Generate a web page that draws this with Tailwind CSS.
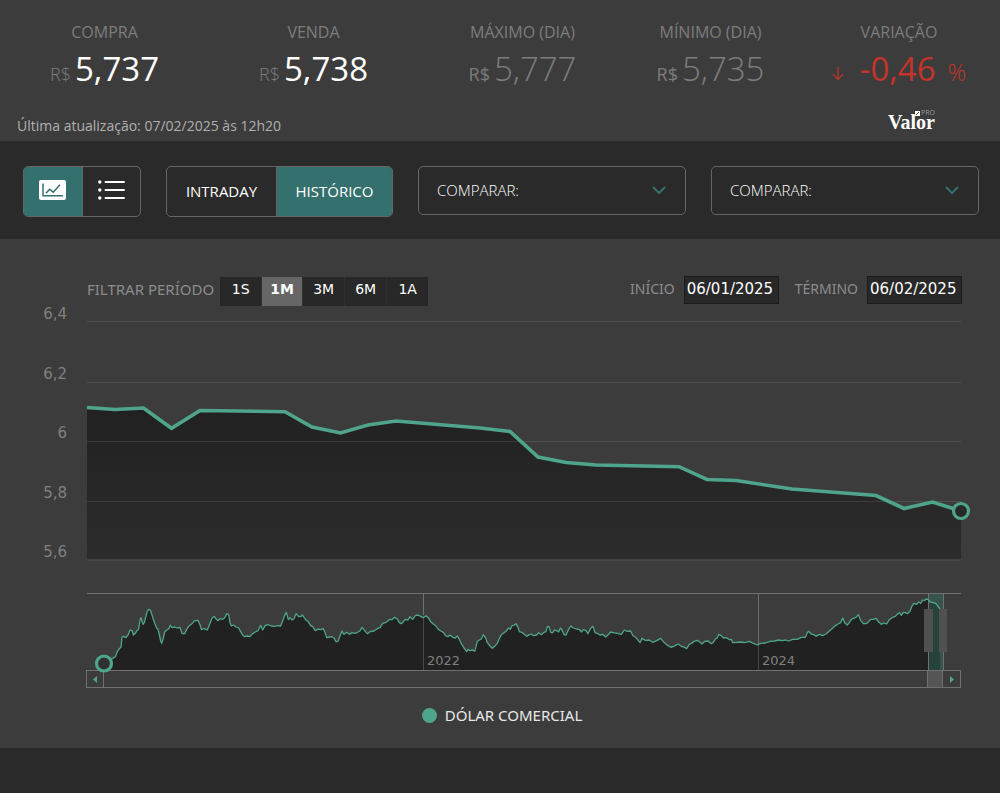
<!DOCTYPE html>
<html lang="pt-BR">
<head>
    <meta charset="UTF-8">
    <meta name="viewport" content="width=device-width, initial-scale=1.0">
    <title>Dólar Comercial - Valor PRO</title>
    <script src="https://cdn.jsdelivr.net/npm/@tailwindcss/browser@4"></script>
</head>
<body class="min-h-screen bg-[#2a2a2a] font-['Open_Sans',sans-serif] text-white antialiased">

    <!-- Cotações -->
    <header class="bg-[#3c3c3c] pt-[21px]">
        <dl class="grid grid-cols-[209fr_209fr_209fr_167fr_206fr] text-center text-[#7c7c7c]">
            <div>
                <dt class="text-[16px] leading-[22px]">COMPRA</dt>
                <dd class="flex h-[52px] items-baseline justify-center gap-1 leading-[52px]"><span class="text-[18px] font-light">R$</span><span class="text-[33px] text-white">5,737</span></dd>
            </div>
            <div>
                <dt class="text-[16px] leading-[22px]">VENDA</dt>
                <dd class="flex h-[52px] items-baseline justify-center gap-1 leading-[52px]"><span class="text-[18px] font-light">R$</span><span class="text-[33px] text-white">5,738</span></dd>
            </div>
            <div>
                <dt class="text-[16px] leading-[22px]">MÁXIMO (DIA)</dt>
                <dd class="flex h-[52px] items-baseline justify-center gap-1 leading-[52px]"><span class="text-[18px]">R$</span><span class="text-[33px] font-light">5,777</span></dd>
            </div>
            <div>
                <dt class="text-[16px] leading-[22px]">MÍNIMO (DIA)</dt>
                <dd class="flex h-[52px] items-baseline justify-center gap-1 leading-[52px]"><span class="text-[18px]">R$</span><span class="text-[33px] font-light">5,735</span></dd>
            </div>
            <div class="pl-1">
                <dt class="text-[16px] leading-[22px]">VARIAÇÃO</dt>
                <dd class="flex h-[52px] items-baseline justify-center text-[#c4342b] leading-[52px]">
                    <svg class="mr-4 h-[14px] w-[12px]" viewBox="0 0 12 14" fill="none" stroke="currentColor" stroke-width="1.2"><path d="M6 0v12.5M.8 7.2 6 12.5l5.2-5.3"/></svg>
                    <span class="mr-3 text-[33px]">-0,46</span><span class="text-[23px] font-light">%</span>
                </dd>
            </div>
        </dl>
        <div class="flex items-start justify-between pt-[15px] pr-[65px] pl-[17px]">
            <p class="text-[14px] leading-[31px] text-[#b0b0b0]">Última atualização: 07/02/2025 às 12h20</p>
            <a href="#" class="relative block font-['Liberation_Serif',serif] text-[20px] leading-[24px] font-bold text-white">Valor
                <span class="absolute -top-0.5 right-0 flex items-center gap-px font-['Open_Sans',sans-serif] text-[7px] leading-[10px] font-normal text-[#9a9a9a]">
                    <svg class="h-[5px] w-[5px]" viewBox="0 0 5 5"><path fill="#fff" d="M0 0h5v5H0z"/><path stroke="#3c3c3c" d="m1 4 3-3"/></svg>PRO
                </span>
            </a>
        </div>
    </header>

    <!-- Controles -->
    <nav class="flex items-start gap-[25px] bg-[#2a2a2a] pt-[25px] pr-[21px] pb-[22px] pl-[23px] text-[15px]">
        <div class="flex h-[51px] w-[118px] overflow-hidden rounded-[5px] border border-[#666]">
            <button aria-label="Gráfico" class="flex flex-1 items-center justify-center border-r border-[#666] bg-[#34706d]">
                <svg class="mb-1 h-[20px] w-[27px]" viewBox="0 0 27 20" fill="none">
                    <rect width="27" height="20" rx="2" fill="#fff"/>
                    <path d="M4 3.5v12.3h20" stroke="#34706d" stroke-width="1.5"/>
                    <path d="m7 13.2 3.6-4 3.6 3 6.8-7.4" stroke="#34706d" stroke-width="1.5"/>
                </svg>
            </button>
            <button aria-label="Lista" class="flex flex-1 items-center justify-center">
                <svg class="mb-1 h-[20px] w-[27px]" viewBox="0 0 27 20" fill="#fff">
                    <circle cx="1.8" cy="2" r="1.7"/><circle cx="1.8" cy="10" r="1.7"/><circle cx="1.8" cy="18" r="1.7"/>
                    <path d="M7.5 2H26M7.5 10H26M7.5 18H26" stroke="#fff" stroke-width="1.9" stroke-linecap="round"/>
                </svg>
            </button>
        </div>
        <div class="flex h-[51px] w-[227px] overflow-hidden rounded-[5px] border border-[#666]">
            <button class="w-[110px] border-r border-[#666]">INTRADAY</button>
            <button class="flex-1 bg-[#34706d]">HISTÓRICO</button>
        </div>
        <div class="relative flex-1">
            <select aria-label="Comparar" class="h-[49px] w-full appearance-none rounded-[5px] border border-[#666] bg-[#2a2a2a] px-[18px] font-light">
                <option>COMPARAR:</option>
            </select>
            <svg class="pointer-events-none absolute top-5 right-5 h-[9px] w-[14px]" viewBox="0 0 14 9" fill="none" stroke="#34706d" stroke-width="2"><path d="m1 1 6 6 6-6"/></svg>
        </div>
        <div class="relative flex-1">
            <select aria-label="Comparar" class="h-[49px] w-full appearance-none rounded-[5px] border border-[#666] bg-[#2a2a2a] px-[18px] font-light">
                <option>COMPARAR:</option>
            </select>
            <svg class="pointer-events-none absolute top-5 right-5 h-[9px] w-[14px]" viewBox="0 0 14 9" fill="none" stroke="#34706d" stroke-width="2"><path d="m1 1 6 6 6-6"/></svg>
        </div>
    </nav>

    <!-- Gráfico -->
    <main class="bg-[#3c3c3c] pt-[37px] pb-[22px] font-['Noto_Sans',sans-serif] text-[15px]">
        <div class="flex h-[30px] items-start justify-between pr-[3.8%] pl-[8.7%] text-[#8c8c8c]">
            <div class="flex items-start">
                <span class="mr-1.5 leading-[26px]">FILTRAR PERÍODO</span>
                <div class="mt-px flex divide-x divide-[#303030] bg-[#282828] font-['DejaVu_Sans',sans-serif] text-[14px] text-white">
                    <button class="h-[29px] w-[42px] pb-1">1S</button>
                    <button class="h-[29px] w-[41px] bg-[#666] pb-1 font-bold">1M</button>
                    <button class="h-[29px] w-[42px] pb-1">3M</button>
                    <button class="h-[29px] w-[42px] pb-1">6M</button>
                    <button class="h-[29px] w-[41px] pb-1">1A</button>
                </div>
            </div>
            <div class="flex items-start text-[14px] leading-[25px]">
                <label for="inicio" class="mr-[9px]">INÍCIO</label>
                <input id="inicio" type="text" value="06/01/2025" class="mr-4 h-[28px] w-[95px] border border-[#1c1c1c] bg-[#282828] px-0.5 pb-0.5 font-['DejaVu_Sans',sans-serif] text-[15px] text-white">
                <label for="termino" class="mr-[9px]">TÉRMINO</label>
                <input id="termino" type="text" value="06/02/2025" class="h-[28px] w-[95px] border border-[#1c1c1c] bg-[#282828] px-0.5 pb-0.5 font-['DejaVu_Sans',sans-serif] text-[15px] text-white">
            </div>
        </div>

        <svg class="relative z-10 block w-full overflow-visible font-['DejaVu_Sans',sans-serif]" viewBox="0 306 1000 364">
            <defs>
                <linearGradient id="area" x1="0" y1="0" x2="0" y2="1">
                    <stop offset="0" stop-color="#212121"/>
                    <stop offset="1" stop-color="#2c2c2c"/>
                </linearGradient>
            </defs>

            <path fill="url(#area)" d="M87 407.5 115 409.5 143.5 408 171.5 428.3 200 410.5 285 411.7 312 427 340.5 433 368 425 396 421 480 428 510 431.5 538 457 566 462.5 596 465 679 466.7 707 479.5 736 480.5 792 489 876 495.5 904 508.5 932.5 502 961 511V560H87z"/>
            <path stroke="#fff" stroke-opacity=".1" fill="none" d="M87 321.5H961M87 382.5H961M87 441.5H961M87 501.5H961"/>
            <path stroke="#555" d="M87 560H961"/>
            <path fill="none" stroke="#4fa58c" stroke-width="3.6" d="M87 407.5 115 409.5 143.5 408 171.5 428.3 200 410.5 285 411.7 312 427 340.5 433 368 425 396 421 480 428 510 431.5 538 457 566 462.5 596 465 679 466.7 707 479.5 736 480.5 792 489 876 495.5 904 508.5 932.5 502 961 511"/>
            <circle cx="961" cy="511" r="7.5" fill="#282828" stroke="#4fa58c" stroke-width="3.2"/>

            <g fill="#808080" font-size="15" text-anchor="end">
                <text x="67" y="319">6,4</text>
                <text x="67" y="379">6,2</text>
                <text x="67" y="438">6</text>
                <text x="67" y="498">5,8</text>
                <text x="67" y="557">5,6</text>
            </g>

            <!-- Navegador com a série completa -->
            <polygon id="nav-area" fill="#212121"/>
            <path stroke="#707070" fill="none" d="M87 593.5H961"/>
            <path stroke="#707070" fill="none" d="M423.5 593V615M758.5 593V644"/>
            <path stroke="#484848" fill="none" d="M423.5 617V670M758.5 645V670"/>
            <rect x="928" y="594" width="15.5" height="76" fill="#337565" fill-opacity=".4"/>
            <path stroke="#707070" d="M928.5 594V670M943.5 594V670"/>
            <polyline id="nav-line" fill="none" stroke="#4fa58c" stroke-width="1.3" stroke-linejoin="round"/>
            <path fill="#505050" d="M924 609h9v43h-9zM939 609h8v43h-8z"/>
            <circle cx="104" cy="663.5" r="7.5" fill="#303030" stroke="#4fa58c" stroke-width="3.2"/>
            <g fill="#808080" font-size="13">
                <text x="427" y="665">2022</text>
                <text x="762" y="665">2024</text>
            </g>
        </svg>

        <!-- Barra de rolagem do navegador -->
        <div class="pr-[3.9%] pl-[8.6%]">
            <div class="flex h-[18px] border border-[#707070]">
                <button aria-label="Anterior" class="flex w-[17px] items-center justify-center border-r border-[#707070]">
                    <svg class="h-[7px] w-[4px]" viewBox="0 0 4 7"><path fill="#4fa58c" d="M4 0v7L0 3.5z"/></svg>
                </button>
                <div class="flex flex-1 justify-end">
                    <div class="w-[16px] border-x border-[#707070] bg-[#555]"></div>
                </div>
                <button aria-label="Próximo" class="flex w-[17px] items-center justify-center">
                    <svg class="h-[7px] w-[4px]" viewBox="0 0 4 7"><path fill="#4fa58c" d="M0 0v7l4-3.5z"/></svg>
                </button>
            </div>
        </div>

        <p class="mt-4 flex items-center justify-center gap-2 pl-1 leading-[22px] text-[#e8e8e8]">
            <span class="size-[15px] rounded-full bg-[#4fa58c]"></span>DÓLAR COMERCIAL
        </p>
    </main>

    <script>
        // Série histórica em três trechos: deslocamento x e pontos, em terços de pixel
        const series = [
            [0, '100,251 110,247 122,240 128,235 136,230 142,215 148,206 153,202 156,172 160,169 168,173 172,167 175,164 178,154 182,150 187,153 190,165 196,160 201,152 206,147 210,120 213,113 216,123 219,133 223,128 227,112 231,96 236,88 241,90 246,105 251,121 255,132 260,144 264,148 268,165 272,183 275,190 279,178 284,156 290,150 296,147 301,136 306,143 314,141 322,144 330,142 336,161 344,161 350,148 358,137 366,131 374,122 384,121 390,134 394,149 402,146 412,150 420,130 426,115 433,109 438,117 444,122 450,116 458,118 464,113 470,101 476,104 480,128 484,138 490,135 498,141 506,144 512,155 518,165 524,170 532,168 540,170 548,161 556,156 564,152 572,136 578,150 586,136 594,134 604,138 614,139 624,137 632,138 638,122 644,106 649,97 655,119 660,113 666,120 672,116 678,101 686,110 692,110 697,105 702,112 708,120 714,124 722,137 728,140 736,152 744,147 752,149 760,146 766,160 770,173 778,171 786,170 792,174 798,185 804,184 810,168 816,153 822,163 830,157 838,163 846,158 856,160 864,156 870,152 876,142 884,152 892,161 900,155 912,153 922,146 930,143 938,130 946,128 952,124 960,118'],
            [930, '36,119 44,112 52,117 58,128 64,131 70,125 76,118 84,120 90,110 98,118 106,107 114,105 122,109 130,113 138,107 146,115 152,125 160,132 168,138 174,147 182,153 190,157 198,168 204,170 210,165 218,172 226,174 232,168 238,178 244,191 252,204 260,215 264,208 270,212 278,210 284,214 288,200 292,184 298,180 304,177 310,164 316,172 322,188 330,198 337,205 344,199 352,190 358,176 364,164 372,158 380,152 386,144 391,148 396,137 402,136 408,131 414,142 418,155 426,157 432,163 440,169 448,164 454,162 460,167 470,165 476,158 484,164 492,157 498,155 502,140 507,139 512,157 518,158 524,150 530,152 536,156 541,144 546,150 552,164 558,165 564,152 572,138 580,144 590,147 598,149 604,156 610,149 618,152 624,161 632,145 639,139 645,158 652,160 660,165 668,163 677,171 686,163 692,156 700,158 712,160 724,163 733,150 742,154 752,153 758,166 768,173 780,188 786,175 796,181 808,180 818,187 830,182 842,175 852,187 864,197 874,202 886,197 894,192 904,199 912,201 920,206 928,193 938,188'],
            [1830, '42,184 52,181 60,187 66,192 74,184 84,183 94,191 100,187 106,177 112,174 116,163 124,167 130,174 140,173 148,179 154,178 158,188 170,187 182,186 194,188 208,184 220,190 232,195 242,190 256,189 270,184 284,183 296,180 306,182 316,180 326,183 338,178 352,178 364,172 376,172 382,158 386,154 394,162 402,164 408,169 418,163 428,167 438,162 448,153 456,146 466,137 474,132 482,128 488,114 494,128 502,135 508,128 514,118 520,115 528,112 535,104 542,121 550,131 558,131 566,125 572,118 580,118 588,115 596,126 604,133 612,129 620,132 628,119 636,113 646,109 652,103 658,98 664,106 670,97 676,98 682,101 690,94 696,78 702,70 710,73 716,66 722,70 728,60 734,62 738,57 744,58 750,66 760,68 768,71 774,79 780,87'],
        ];
        const points = series.flatMap(([dx, pts]) => pts.split(' ').map(p => {
            const [x, y] = p.split(',').map(Number);
            return [70 + (x + dx) / 3, 580 + y / 3];
        }));
        document.getElementById('nav-line').setAttribute('points', points.join(' '));
        document.getElementById('nav-area').setAttribute('points', [[104, 670], ...points, [940, 670]].join(' '));
    </script>
</body>
</html>
